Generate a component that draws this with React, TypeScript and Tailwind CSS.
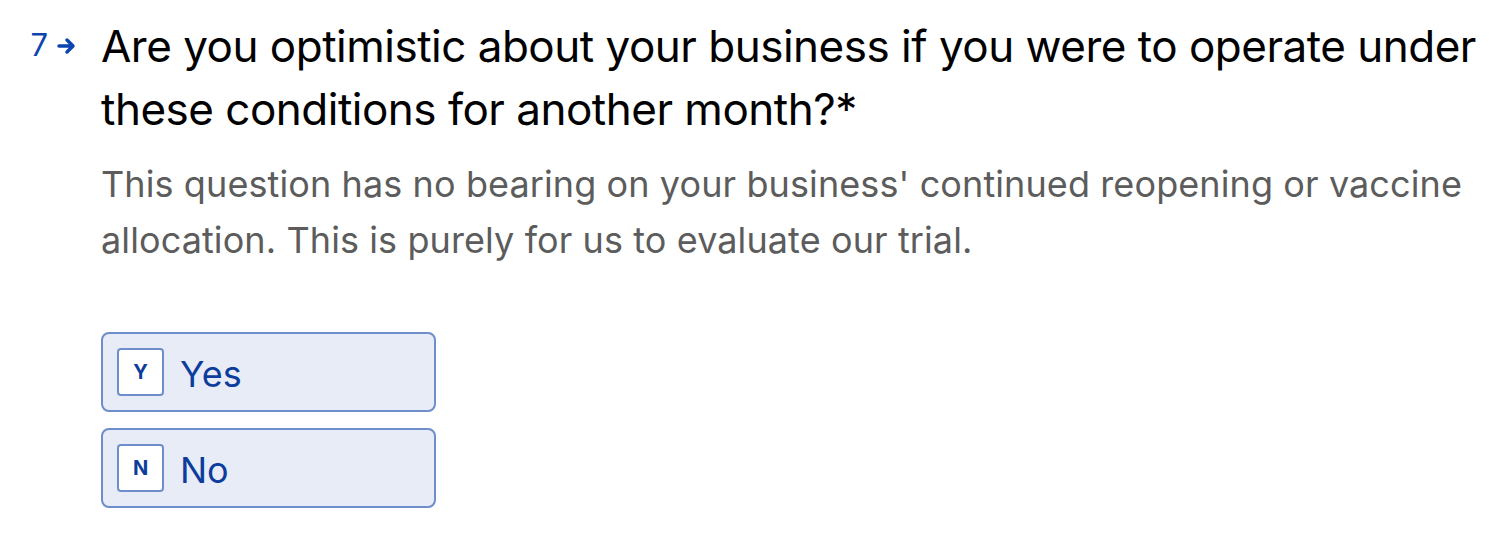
const font = { fontFamily: "Inter, 'Noto Sans', sans-serif" };

function Choice({ k, label }: { k: string; label: string }) {
  return (
    <div className="flex h-[80px] w-[335px] items-center rounded-[8px] border-2 border-[#6f8dcb] bg-[#e7ecf7] pl-[14px]">
      <span className="flex h-[48px] w-[47px] items-center justify-center rounded-[4px] border-2 border-[#6f8dcb] bg-white text-[20px] font-bold text-[#0c3c9c]">
        {k}
      </span>
      <span className="ml-[16px] pt-[4px] text-[36px] text-[#0c3c9c]">{label}</span>
    </div>
  );
}

export default function App() {
  return (
    <div className="h-[548px] w-[1510px] bg-white" style={font}>
      <div className="flex pt-[15px]">
        <div className="flex w-[101px] items-start justify-end pr-[24px] pt-[12px] text-[#0c45b0]">
          <span className="text-[31px] leading-[36px]">7</span>
          <svg className="ml-[9px] mt-[9px]" width="20" height="20" viewBox="0 0 20 20">
            <path d="M2 10h13M10 4l6 6-6 6" fill="none" stroke="currentColor" strokeWidth="3.5" strokeLinecap="round" strokeLinejoin="round" />
          </svg>
        </div>
        <div className="flex-1">
          <h1 className="text-[44px] leading-[63px] tracking-[-0.5px] text-black">
            Are you optimistic about your business if you were to operate under these conditions for another month?*
          </h1>
          <p className="mt-[15px] w-[1400px] text-[36px] leading-[56px] tracking-[0.1px] text-[#5c5c5c]">
            This question has no bearing on your business' continued reopening or vaccine allocation. This is purely for us to evaluate our trial.
          </p>
          <div className="mt-[64px] flex flex-col gap-[16px]">
            <Choice k="Y" label="Yes" />
            <Choice k="N" label="No" />
          </div>
        </div>
      </div>
    </div>
  );
}
